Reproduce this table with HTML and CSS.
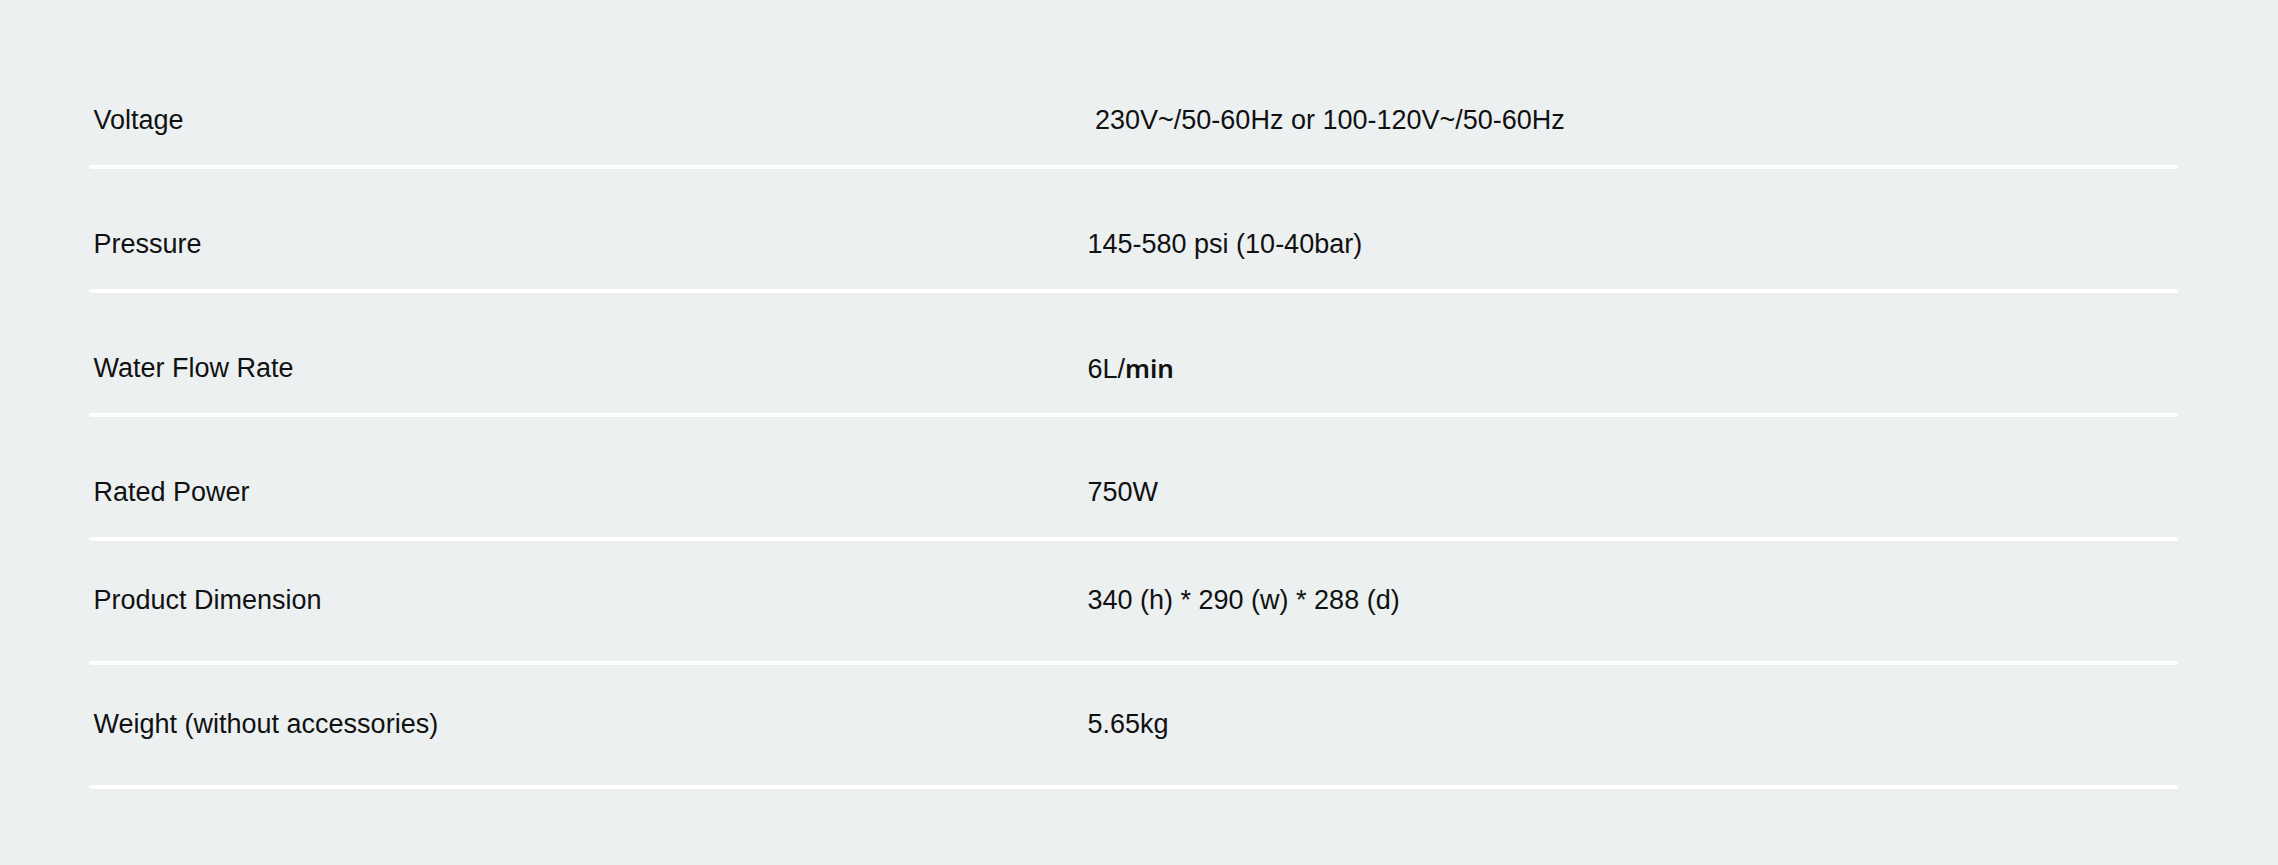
FILE: index.html
```html
<!DOCTYPE html>
<html lang="en">
<head>
<meta charset="utf-8">
<title>Specifications</title>
<link rel="stylesheet" href="styles.css">
</head>
<body>
<main class="specs">
  <div class="spec">
    <div class="spec-row spec-row--low">
      <div class="spec-label">Voltage</div>
      <div class="spec-value">&nbsp;230V~/50-60Hz or 100-120V~/50-60Hz</div>
    </div>
    <div class="divider"></div>
  </div>
  <div class="spec">
    <div class="spec-row spec-row--low">
      <div class="spec-label">Pressure</div>
      <div class="spec-value">145-580 psi (10-40bar)</div>
    </div>
    <div class="divider"></div>
  </div>
  <div class="spec">
    <div class="spec-row spec-row--low">
      <div class="spec-label">Water Flow Rate</div>
      <div class="spec-value">6L/<span class="unit">min</span></div>
    </div>
    <div class="divider"></div>
  </div>
  <div class="spec">
    <div class="spec-row spec-row--low">
      <div class="spec-label">Rated Power</div>
      <div class="spec-value">750W</div>
    </div>
    <div class="divider"></div>
  </div>
  <div class="spec">
    <div class="spec-row">
      <div class="spec-label">Product Dimension</div>
      <div class="spec-value">340 (h) * 290 (w) * 288 (d)</div>
    </div>
    <div class="divider"></div>
  </div>
  <div class="spec">
    <div class="spec-row">
      <div class="spec-label">Weight (without accessories)</div>
      <div class="spec-value">5.65kg</div>
    </div>
    <div class="divider"></div>
  </div>
</main>
</body>
</html>
```
FILE: styles.css
```css
html, body {
  margin: 0;
  padding: 0;
  background: #ecf0f1;
}

body {
  font-family: "Liberation Sans", Arial, sans-serif;
  color: #111111;
  font-size: 27px;
}

.specs {
  width: 2089px;
  padding: 45px 0 0 89px;
}

.spec-row {
  display: grid;
  grid-template-columns: 994px 1fr;
  height: 120px;
  box-sizing: border-box;
  padding-top: 41px;
  line-height: 36px;
}

.spec-row--low {
  padding-top: 57px;
}

.spec-label,
.spec-value {
  padding-left: 4.5px;
  white-space: nowrap;
}

.unit {
  font-family: "Noto Sans", "Open Sans", sans-serif;
  font-weight: 600;
  font-size: 26px;
}

.divider {
  height: 4px;
  background: #ffffff;
  border-radius: 2px;
}
```
